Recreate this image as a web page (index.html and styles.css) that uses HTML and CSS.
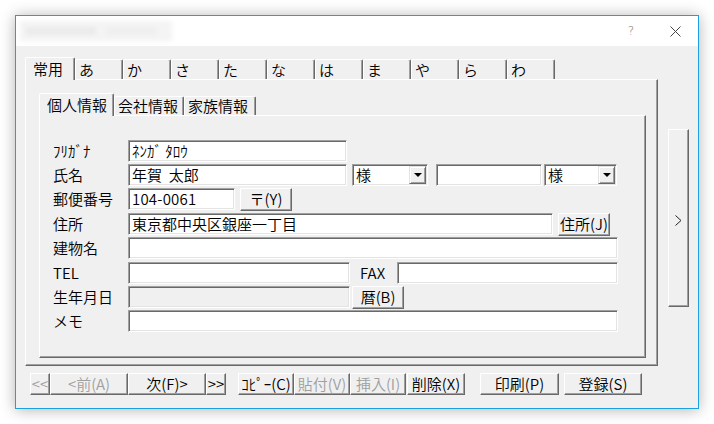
FILE: index.html
```html
<!DOCTYPE html>
<html lang="ja">
<head>
<meta charset="utf-8">
<title>住所録</title>
<link rel="stylesheet" href="styles.css">
</head>
<body>
<div class="window">
  <div class="titlebar">
    <div class="title-blur"><span class="tb1"></span><span class="tb2"></span></div>
    <span class="help">?</span>
    <svg class="close" width="11" height="11" viewBox="0 0 11 11"><path d="M0.5 0.5 L10.5 10.5 M10.5 0.5 L0.5 10.5" stroke="#444" stroke-width="1" fill="none"/></svg>
  </div>
  <div class="client">
    <div class="top">
      <div class="tabarea">
        <div class="tabs">
          <div class="tab sel">常用</div>
          <div class="tab">あ</div>
          <div class="tab">か</div>
          <div class="tab">さ</div>
          <div class="tab">た</div>
          <div class="tab">な</div>
          <div class="tab">は</div>
          <div class="tab">ま</div>
          <div class="tab">や</div>
          <div class="tab">ら</div>
          <div class="tab">わ</div>
        </div>
        <div class="panel">
          <div class="tabs subtabs">
            <div class="tab sel w-personal">個人情報</div>
            <div class="tab w-company">会社情報</div>
            <div class="tab w-family">家族情報</div>
          </div>
          <div class="subpanel">
            <div class="form">
              <div class="row">
                <span class="lbl">ﾌﾘｶﾞﾅ</span>
                <div class="field w219">ﾈﾝｶﾞ ﾀﾛｳ</div>
              </div>
              <div class="row">
                <span class="lbl">氏名</span>
                <div class="field w219">年賀&nbsp;&nbsp;太郎</div>
                <div class="select w76 ml5"><span class="sel-text">様</span><span class="drop"><i class="tri"></i></span></div>
                <div class="field w106 ml8"></div>
                <div class="select w73 ml2"><span class="sel-text">様</span><span class="drop"><i class="tri"></i></span></div>
              </div>
              <div class="row">
                <span class="lbl">郵便番号</span>
                <div class="field w107 num">104-0061</div>
                <div class="btn w52 ml5">〒(Y)</div>
              </div>
              <div class="row">
                <span class="lbl">住所</span>
                <div class="field w425">東京都中央区銀座一丁目</div>
                <div class="btn w52 ml5">住所(J)</div>
              </div>
              <div class="row">
                <span class="lbl">建物名</span>
                <div class="field w490"></div>
              </div>
              <div class="row">
                <span class="lbl">TEL</span>
                <div class="field w222"></div>
                <span class="lbl-fax">FAX</span>
                <div class="field w221"></div>
              </div>
              <div class="row">
                <span class="lbl">生年月日</span>
                <div class="field w222 disabled"></div>
                <div class="btn w52 ml2">暦(B)</div>
              </div>
              <div class="row">
                <span class="lbl">メモ</span>
                <div class="field w490"></div>
              </div>
            </div>
          </div>
        </div>
      </div>
      <div class="side-btn">
        <svg width="7" height="11" viewBox="0 0 7 11"><path d="M0.5 0.5 L6 5.5 L0.5 10.5" stroke="#222" stroke-width="1" fill="none"/></svg>
      </div>
    </div>
    <div class="btnbar">
      <div class="btn bb w20 off">&lt;&lt;</div>
      <div class="btn bb w78 off">&lt;前(A)</div>
      <div class="btn bb w78">次(F)&gt;</div>
      <div class="btn bb w20">&gt;&gt;</div>
      <div class="btn bb w56 ml12">ｺﾋﾟｰ(C)</div>
      <div class="btn bb w56 off">貼付(V)</div>
      <div class="btn bb w56 off">挿入(I)</div>
      <div class="btn bb w58 ml1">削除(X)</div>
      <div class="btn bb w79 ml15">印刷(P)</div>
      <div class="btn bb w78 ml5">登録(S)</div>
    </div>
  </div>
</div>
</body>
</html>
```

FILE: styles.css
```css
* { box-sizing: border-box; }
html, body { margin: 0; padding: 0; background: #fff; }
body {
  width: 714px;
  height: 424px;
  overflow: hidden;
  font-family: "Noto Sans CJK JP", "Noto Sans", sans-serif;
  font-size: 15px;
  font-weight: 350;
  color: #000;
}

.window {
  margin: 15px 0 0 15px;
  width: 684px;
  height: 394px;
  border: 1px solid #1aa1e1;
  box-shadow: 0 1px 14px rgba(0, 0, 0, 0.3);
  background: #f0f0f0;
  display: flex;
  flex-direction: column;
}

/* title bar */
.titlebar {
  flex: none;
  height: 30px;
  background: #fff;
  display: flex;
  align-items: center;
}
.title-blur {
  margin-left: 4px;
  width: 152px;
  height: 20px;
  background: #f4f4f4;
  display: flex;
  align-items: center;
  gap: 10px;
  padding: 0 6px;
  filter: blur(2px);
}
.tb1 { width: 70px; height: 8px; background: #ebebeb; }
.tb2 { width: 50px; height: 8px; background: #efefef; }
.help {
  margin-left: auto;
  font-family: "DejaVu Sans", sans-serif;
  font-size: 12px;
  color: #777;
  line-height: 12px;
}
.close { margin: 0 17px 0 36px; display: block; }

/* client area */
.client {
  flex: 1;
  padding: 11px 9px 0 9px;
  display: flex;
  flex-direction: column;
}
.top { display: flex; align-items: flex-start; }
.tabarea { width: 633px; flex: none; }

.tabs {
  display: flex;
  align-items: flex-end;
  height: 22px;
  position: relative;
  z-index: 1;
}
.tab {
  flex: none;
  width: 48px;
  height: 20px;
  border-top: 1px solid #fff;
  border-left: 1px solid #fff;
  border-right: 1px solid #696969;
  border-top-left-radius: 2px;
  border-top-right-radius: 2px;
  box-shadow: inset -1px 0 #a0a0a0;
  padding-left: 3px;
  line-height: 20px;
  background: #f0f0f0;
  white-space: nowrap;
}
.tab.sel {
  width: 50px;
  height: 23px;
  margin-bottom: -1px;
  padding-left: 7px;
  line-height: 21px;
}

.panel {
  width: 633px;
  height: 287px;
  border-top: 1px solid #fff;
  border-left: 1px solid #fff;
  border-right: 1px solid #696969;
  border-bottom: 1px solid #696969;
  box-shadow: inset -1px -1px #a0a0a0;
  padding: 13px 0 0 13px;
}

.subtabs .tab { height: 19px; line-height: 18px; }
.subtabs .tab.sel { height: 23px; line-height: 21px; }
.w-personal { width: 75px !important; }
.w-company { width: 70px; }
.w-family { width: 72px; }

.subpanel {
  width: 607px;
  height: 243px;
  border-top: 1px solid #fff;
  border-left: 1px solid #fff;
  border-right: 1px solid #696969;
  border-bottom: 1px solid #696969;
  box-shadow: inset -1px -1px #a0a0a0;
  padding: 24px 0 0 13px;
}

.form {
  display: grid;
  grid-template-rows: 24px 24px 25px 24px 25px 24px 24px 22px;
}
.row { display: flex; align-items: flex-start; }
.lbl {
  flex: none;
  width: 75px;
  height: 22px;
  line-height: 22px;
  white-space: nowrap;
}
.lbl-fax {
  flex: none;
  width: 47px;
  height: 22px;
  line-height: 22px;
  padding-left: 10px;
}

.field {
  flex: none;
  height: 22px;
  border-top: 1px solid #a0a0a0;
  border-left: 1px solid #a0a0a0;
  border-right: 1px solid #fff;
  border-bottom: 1px solid #fff;
  box-shadow: inset 1px 1px #696969, inset -1px -1px #e3e3e3;
  background: #fff;
  padding: 0 3px;
  line-height: 20px;
  white-space: nowrap;
  overflow: hidden;
}
.field.num { letter-spacing: 0.2px; }
.field.disabled { background: #f0f0f0; }

.select {
  flex: none;
  height: 22px;
  display: flex;
  border-top: 1px solid #a0a0a0;
  border-left: 1px solid #a0a0a0;
  border-right: 1px solid #fff;
  border-bottom: 1px solid #fff;
  box-shadow: inset 1px 1px #696969, inset -1px -1px #e3e3e3;
  background: #fff;
  padding: 1px;
}
.sel-text { flex: 1; padding-left: 2px; line-height: 18px; }
.drop {
  flex: none;
  width: 17px;
  height: 18px;
  background: #f0f0f0;
  border-top: 1px solid #e3e3e3;
  border-left: 1px solid #e3e3e3;
  border-right: 1px solid #696969;
  border-bottom: 1px solid #696969;
  box-shadow: inset 1px 1px #fff, inset -1px -1px #a0a0a0;
  display: flex;
  align-items: center;
  justify-content: center;
}
.tri {
  display: block;
  width: 0;
  height: 0;
  border-left: 4px solid transparent;
  border-right: 4px solid transparent;
  border-top: 4px solid #000;
  margin-left: 1px;
}

.btn {
  flex: none;
  height: 23px;
  border-top: 1px solid #fff;
  border-left: 1px solid #fff;
  border-right: 1px solid #696969;
  border-bottom: 1px solid #696969;
  box-shadow: inset -1px -1px #a0a0a0;
  background: #f0f0f0;
  text-align: center;
  line-height: 20px;
  white-space: nowrap;
  overflow: hidden;
}
.btn.bb { height: 22px; line-height: 19px; }
.btn.off { color: #a0a0a0; }

.w20 { width: 20px; }
.w52 { width: 52px; }
.w56 { width: 56px; }
.w58 { width: 58px; }
.w73 { width: 73px; }
.w76 { width: 76px; }
.w78 { width: 78px; }
.w79 { width: 79px; }
.w106 { width: 106px; }
.w107 { width: 107px; }
.w219 { width: 219px; }
.w221 { width: 221px; }
.w222 { width: 222px; }
.w425 { width: 425px; }
.w490 { width: 490px; }
.ml1 { margin-left: 1px; }
.ml2 { margin-left: 2px; }
.ml5 { margin-left: 5px; }
.ml8 { margin-left: 8px; }
.ml12 { margin-left: 12px; }
.ml15 { margin-left: 15px; }

.side-btn {
  flex: none;
  margin: 72px 0 0 10px;
  width: 21px;
  height: 178px;
  border-top: 1px solid #fff;
  border-left: 1px solid #fff;
  border-right: 1px solid #696969;
  border-bottom: 1px solid #696969;
  box-shadow: inset -1px -1px #a0a0a0;
  display: flex;
  align-items: center;
  justify-content: center;
}
.side-btn svg { display: block; margin-top: 4px; }

.btnbar {
  display: flex;
  margin-top: 7px;
  padding-left: 5px;
}
```
